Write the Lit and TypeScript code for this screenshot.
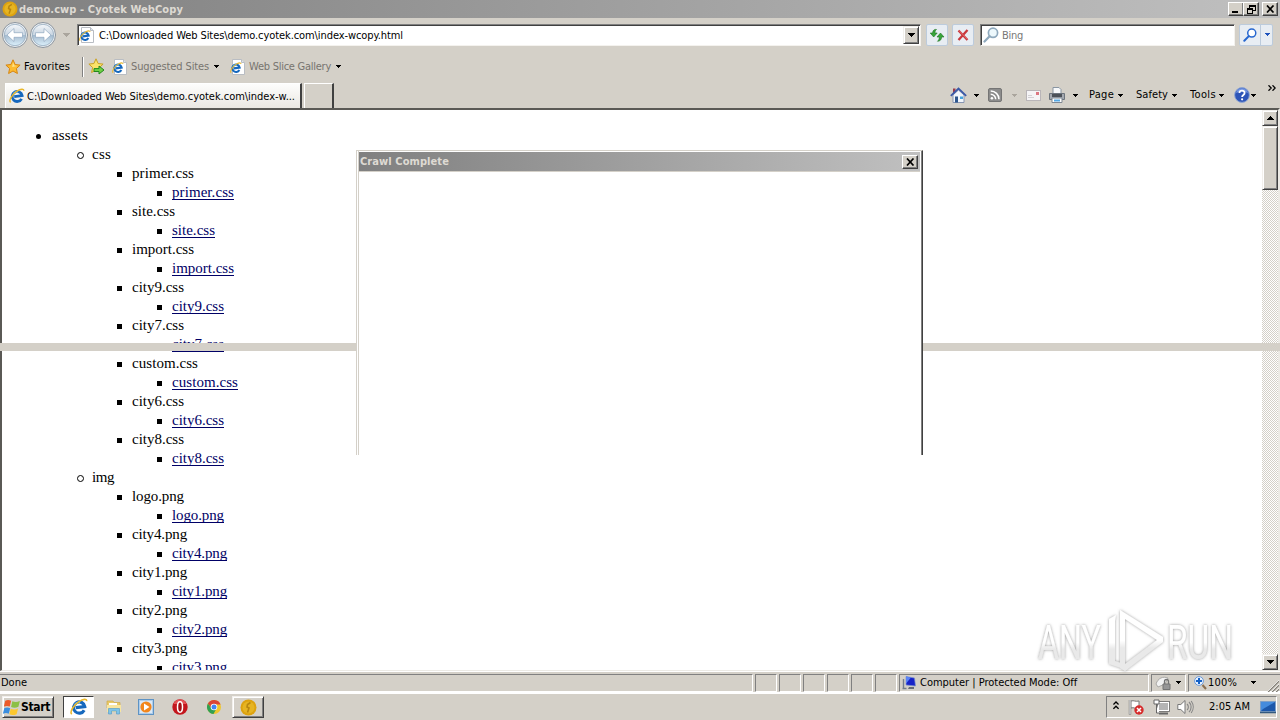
import { LitElement, html, svg, css } from "lit";
import { customElement, property } from "lit/decorators.js";

/** A single line of text whose tracking is adjusted to fill a given width. */
@customElement("fit-text")
class FitText extends LitElement {
  @property({ type: Number }) w = 0;
  @property() text = "";
  static styles = css`
    :host { display: block; white-space: pre; }
    .t { display: inline-block; text-decoration: inherit; }
  `;
  render() {
    return html`<span class="t">${this.text}</span>`;
  }
  updated() {
    const s = this.renderRoot.querySelector(".t") as HTMLElement;
    s.style.letterSpacing = "0px";
    const n = s.getBoundingClientRect().width;
    if (this.w) s.style.letterSpacing = (this.w - n) / this.text.length + "px";
  }
}

const t = (text: string, w: number, cls = "") =>
  html`<fit-text class=${cls} .text=${text} .w=${w}></fit-text>`;

const arrow = (cls = "") =>
  html`<svg class="arrow ${cls}" width="5" height="3" viewBox="0 0 5 3" shape-rendering="crispEdges"><path d="M0 0h5v1h-1v1h-1v1h-1v-1h-1v-1h-1z" fill="currentColor"/></svg>`;
const arrow7 = (cls = "") =>
  html`<svg class="arrow ${cls}" width="7" height="4" viewBox="0 0 7 4" shape-rendering="crispEdges"><path d="M0 0h7v1h-1v1h-1v1h-1v1h-1v-1h-1v-1h-1v-1h-1z" fill="currentColor"/></svg>`;

const eGlyph = svg`
  <path d="M12.6 10.8A5 5 0 1 1 13.1 7.6L5.2 8.6" fill="none" stroke="#1668bd" stroke-width="2.8"/>
  <path d="M4.2 7.2A3.6 3.6 0 0 1 9 4" fill="none" stroke="#5fb9f2" stroke-width="1.4"/>
  <path d="M1.6 14.4C-.6 12.6 3 6.4 8 3.2 11.6.8 15 .4 14.8 2.8" fill="none" stroke="#e9b72c" stroke-width="1.4"/>`;
const ie = (s: number) => html`<svg width=${s} height=${s} viewBox="0 0 16 16">${eGlyph}</svg>`;
const iePage = html`<svg width="15" height="16" viewBox="0 0 15 16">
  <path d="M2.5.5h9l3 3v12h-12z" fill="#fff" stroke="#b9bdc3"/><path d="M11.5.5v3h3" fill="#dde3ea" stroke="#b9bdc3"/>
  <g transform="translate(0 3) scale(.74)">${eGlyph}</g></svg>`;
const starPath = "M8 .8l2.1 4.7 5 .6-3.7 3.4 1 5L8 12l-4.4 2.5 1-5L.9 6.1l5-.6z";
const star = html`<svg width="16" height="16" viewBox="0 0 16 16"><path d=${starPath} fill="#fdbb30" stroke="#d68511"/><path d="M8 3.2l1.2 3.2 3 .5-5 1z" fill="#ffe48d"/></svg>`;
const starAdd = html`<svg width="17" height="17" viewBox="0 0 17 17"><path d=${starPath} fill="#fbe36a" stroke="#c9a125"/><path d="M6 10.6h5V8l5 4-5 4v-2.500H6z" fill="#6fd045" stroke="#23871d"/></svg>`;
const coin = (s: number) => html`<svg width=${s} height=${s} viewBox="0 0 17 17"><circle cx="8.500" cy="8.500" r="8" fill="#dda20f"/><circle cx="8.500" cy="8.500" r="6" fill="#e6b422"/><path d="M10.500 3.500L7.500 5.500 7 8l2 1-1.500 4.500" fill="none" stroke="#b8860f" stroke-width="1.600"/></svg>`;
const orb = (right: boolean) => html`<svg width="28" height="28" viewBox="0 0 28 28">
  <defs><linearGradient id="g" x2="0" y2="1"><stop offset="0" stop-color="#f5f8fb"/><stop offset=".48" stop-color="#cad6e2"/><stop offset=".52" stop-color="#a5bbcf"/><stop offset="1" stop-color="#dcf0fb"/></linearGradient></defs>
  <circle cx="14" cy="14" r="12.500" fill="#edf1f4" stroke="#8b949e"/><circle cx="14" cy="14" r="10.700" fill="url(#g)" stroke="#92a8bd" stroke-width=".8"/>
  <g transform=${right ? "matrix(-1 0 0 1 28 0)" : ""}><path d="M6 14l7-6.500v4.200h8.500v4.600H13v4.200z" fill="#fff" stroke="#8fa8c0" stroke-width=".7"/></g></svg>`;
const lens = (c: string, s: number, f: string) => html`<svg width=${s} height=${s} viewBox="0 0 16 16"><circle cx="10" cy="5.800" r="4.600" fill=${f} stroke=${c} stroke-width="1.700"/><path d="M6.600 9.300L1.500 14.500" stroke=${c} stroke-width="2.300" stroke-linecap="round"/></svg>`;
const refresh = html`<svg width="16" height="16" viewBox="0 0 16 16"><path d="M7.500 2.500C5.800 2 3.600 3 3.600 6H1.200l3.500 4 3.500-4H5.900c0-1.500.5-2.700 1.600-3.500z" fill="#38a53a" stroke="#1f7423" stroke-width=".6"/><path d="M8.500 14.300c2.400 0 4.100-1.600 4.100-4.300H15l-3.500-4L8 10h2.300c0 1.800-.6 3.200-1.800 4.300z" fill="#38a53a" stroke="#1f7423" stroke-width=".6"/></svg>`;
const stop = html`<svg width="14" height="14" viewBox="0 0 14 14"><path d="M2.500 2.500l9 9.500M11.500 2L2.500 12" stroke="#c9373c" stroke-width="2.300"/><path d="M3 2.500l8.500 9" stroke="#ec7d7d" stroke-width=".7"/></svg>`;
const home = html`<svg width="17" height="17" viewBox="0 0 17 17"><path d="M3 8v7.500h11V8L8.500 3z" fill="#f1f5fb" stroke="#8795b2"/><path d="M3 1.500h2.500V5L3 7z" fill="#9a3b4b"/><path d="M.8 8.800L8.500 1.500l7.700 7.300" fill="none" stroke="#3b59a8" stroke-width="1.800"/><path d="M5 9.500h3v6H5z" fill="#2d568e"/><path d="M10 9.500h3V12h-3z" fill="#47a4dd"/></svg>`;
const rss = html`<svg width="14" height="14" viewBox="0 0 14 14"><rect x=".5" y=".5" width="13" height="13" rx="1.500" fill="#8c8c8c" stroke="#757575"/><circle cx="3.900" cy="10.200" r="1.300" fill="#fff"/><path d="M2.700 6.200a5 5 0 0 1 5 5M2.700 3a8.300 8.300 0 0 1 8.300 8.200" fill="none" stroke="#fff" stroke-width="1.500"/></svg>`;
const mail = html`<svg width="15" height="11" viewBox="0 0 15 11"><rect x=".5" y=".5" width="14" height="10" fill="#f5f4f6" stroke="#b9b5b8"/><path d="M2 7.500h6M2 5.500h4" stroke="#d2d0d4"/><path d="M10 2h3v3h-3z" fill="#dc7681"/></svg>`;
const printer = html`<svg width="16" height="16" viewBox="0 0 16 16"><path d="M4 .5h6l2 2V7H4z" fill="#f7f9fb" stroke="#8995a2"/><path d="M.5 6.500h15v6H.5z" fill="#a4a9b0" stroke="#6d747d"/><path d="M3 7h10v3H3z" fill="#4d5259"/><path d="M3 11h10v4.500H3z" fill="#fff" stroke="#7f8792"/><path d="M5 12.500h6v2H5z" fill="#55a8e4"/></svg>`;
const help = html`<svg width="16" height="16" viewBox="0 0 16 16"><circle cx="8" cy="8" r="7.400" fill="#2e55b8" stroke="#8fa6d4"/><path d="M2 6a6.200 6.200 0 0 1 12 0c-4-2-8-2-12 0z" fill="#7394df"/><path d="M5.400 6c.2-3.200 5.300-3 5.200 0 0 2-2.500 1.900-2.500 4" fill="none" stroke="#fff" stroke-width="1.800"/><circle cx="8.100" cy="12.300" r="1.100" fill="#fff"/></svg>`;
const chevrons = html`<svg width="8" height="6" viewBox="0 0 8 6"><path d="M.5.3L3.200 3 .5 5.700M4.500.3L7.200 3 4.500 5.700" fill="none" stroke="#000" stroke-width="1.300"/></svg>`;
const chevUp = html`<svg class="lift" width="6" height="9" viewBox="0 0 6 9"><path d="M.4 3.500L3 1l2.600 2.500M.4 7.800L3 5.300l2.600 2.500" fill="none" stroke="#000" stroke-width="1.400"/></svg>`;
const closeX = html`<svg width="9" height="8" viewBox="0 0 9 8"><path d="M1 .5l6.500 7M7.500 .5L1 7.500" stroke="#000" stroke-width="1.700"/></svg>`;
const minimize = html`<svg width="9" height="8" viewBox="0 0 9 8"><path d="M0 6h6v2H0z"/></svg>`;
const restore = html`<svg width="9" height="9" viewBox="0 0 9 9" shape-rendering="crispEdges"><path d="M2 0h7v6H6V5h2V2H3v1H2zM0 3h6v6H0zM1 5v3h4V5z" fill-rule="evenodd"/></svg>`;
const computer = html`<svg width="15" height="15" viewBox="0 0 15 15"><path d="M1.500 4v9M.5 13.500h4" stroke="#747d8a" stroke-width="1.400"/><path d="M4 1.500l8.500 1.500 1 8-9.500-1z" fill="#1723c8" stroke="#7e93cc" stroke-width=".7"/><path d="M4 1.500l5 1L4 8.500z" fill="#5a83f5"/><path d="M7 12h5v2H6z" fill="#666c78"/></svg>`;
const filter = html`<svg width="16" height="16" viewBox="0 0 16 16"><path d="M1 9C3 3 8 1 13 3l-3 6-7 3z" fill="#f2f2f2" stroke="#aaa9a6"/><path d="M9.500 9V6.500a2 2 0 0 1 4 0V9" fill="none" stroke="#747474" stroke-width="1.300"/><path d="M8 9h7v5.500H8z" fill="#969696" stroke="#747474"/></svg>`;
const zoomIn = html`<svg width="13" height="14" viewBox="0 0 13 14"><circle cx="5" cy="5" r="4.400" fill="#e6f1ff" stroke="#6e9bd8"/><path d="M5 2v6M2 5h6" stroke="#1461c6" stroke-width="2"/><path d="M8.500 9l3.500 4" stroke="#8b6f50" stroke-width="2"/></svg>`;
const grip = html`<svg width="12" height="12" viewBox="0 0 12 12"><path d="M1 12L12 1M5 12l7-7M9 12l3-3" stroke="#848078" stroke-width="1.500"/><path d="M0 12L12 0M4 12l8-8M8 12l4-4" stroke="#fff" stroke-width=".7"/></svg>`;
const windows = html`<svg width="18" height="17" viewBox="0 0 16 15"><path d="M2 1.500c2-1 3.500-.8 5.200.1L6 6.700c-1.600-.8-3-.9-5.200 0z" fill="#ec5a29"/><path d="M8.300 2c2 .9 4 1 6.700-.2l-1.300 5.100c-2.300 1-4.300 1-6.500.2z" fill="#8cc045"/><path d="M.5 8c2-.9 3.500-.7 5.200.1l-1.300 5c-1.600-.9-3.200-.9-5.200 0z" fill="#3b8ede" transform="translate(.7)"/><path d="M6.900 8.500c2 .9 4 1 6.500-.1l-1.300 5c-2.300 1-4.300 1-6.500.2z" fill="#fcc82f"/></svg>`;
const explorer = html`<svg width="16" height="16" viewBox="0 0 16 16"><path d="M1 2h6l1 1.500h6V9H1z" fill="#e9c967" stroke="#ceaa49" stroke-width=".7"/><path d="M3 4h8v4H3z" fill="#fff"/><path d="M1 6h14v7H1z" fill="#f8e5a0"/><path d="M2.500 15V9.500h11V15h-3v-3h-5v3z" fill="#7fc4e8" stroke="#5a9fc8" stroke-width=".7"/></svg>`;
const media = html`<svg width="16" height="16" viewBox="0 0 16 16"><rect x=".5" y=".5" width="15" height="15" fill="#aecdeb" stroke="#5e93c4"/><rect x="2" y="2" width="12" height="12" fill="#dbe9f6"/><circle cx="8" cy="8" r="5.600" fill="#f2861c"/><path d="M6 4.600v6.800L11.500 8z" fill="#fff"/></svg>`;
const opera = html`<svg width="16" height="16" viewBox="0 0 16 16"><circle cx="8" cy="8" r="7.700" fill="#c3161d"/><path d="M1.500 5a7 7 0 0 1 13 0z" fill="#e35356"/><ellipse cx="8" cy="8" rx="2.500" ry="5.200" fill="#a30e14" stroke="#fff" stroke-width="1.500"/></svg>`;
const chrome = html`<svg width="16" height="16" viewBox="0 0 16 16"><circle cx="8" cy="8" r="7" fill="#efc72e"/><path d="M1.900 4.500A7 7 0 0 1 14.600 5.500H8L5.500 9.500z" fill="#db4437"/><path d="M1.900 4.500A7 7 0 0 0 7.500 15l3-5.500-5 0z" fill="#31a052"/><circle cx="8" cy="8" r="3.300" fill="#fff"/><circle cx="8" cy="8" r="2.500" fill="#4285f4"/></svg>`;
const flag = html`<svg width="17" height="16" viewBox="0 0 17 16"><path d="M2 1v14.500" stroke="#777" stroke-width="2.400"/><path d="M3 2c3-1 4 1 8 0v7c-4 1-5-1-8 0z" fill="#fff" stroke="#777"/><path d="M2 1v14" stroke="#fff"/><circle cx="11" cy="11" r="4.700" fill="#d62c2c"/><path d="M9 9l4 4M13 9l-4 4" stroke="#fff" stroke-width="1.500"/></svg>`;
const network = html`<svg width="17" height="16" viewBox="0 0 17 16"><rect x="5.500" y="3.500" width="10" height="8" fill="#b4b4b4" stroke="#fff"/><rect x="4.500" y="2.500" width="12" height="10" fill="none" stroke="#666" stroke-width=".8"/><path d="M6 14.500h9" stroke="#666" stroke-width="2"/><path d="M1 1h5v4H1zM3.500 5v9h3" fill="#fff" stroke="#666"/></svg>`;
const speaker = html`<svg width="17" height="16" viewBox="0 0 17 16"><path d="M.8 5.500h3L8 1.500v13l-4.200-4h-3z" fill="#fff" stroke="#777"/><path d="M10 5a4 4 0 0 1 0 6M12 3a7 7 0 0 1 0 10M14.200 2a10 10 0 0 1 0 12" fill="none" stroke="#858585" stroke-width="1.100"/></svg>`;
const desktop = html`<svg width="16" height="13" viewBox="0 0 16 13"><path d="M.5.5h15v10H.5z" fill="#1c57aa" stroke="#7e9fc6"/><path d="M1 1h14L3 8 1 10z" fill="#448bdd"/><path d="M0 11.500h16" stroke="#33597f" stroke-width="1.500"/></svg>`;

const rows: [number, string, number][] = [[0, "assets", 36], [1, "css", 19]];
const add = (name: string, w: number) => rows.push([2, name, w], [3, name, w]);
([["primer.css", 62], ["site.css", 43], ["import.css", 62], ["city9.css", 52], ["city7.css", 52], ["custom.css", 66], ["city6.css", 52], ["city8.css", 52]] as [string, number][]).forEach(([n, w]) => add(n, w));
rows.push([1, "img", 22]);
([["logo.png", 52], ["city4.png", 55], ["city1.png", 55], ["city2.png", 55], ["city3.png", 55]] as [string, number][]).forEach(([n, w]) => add(n, w));

@customElement("app-root")
class AppRoot extends LitElement {
  static styles = css`
    :host { display: block; width: 1280px; height: 720px; overflow: hidden; background: #d4d0c8; color: #000;
      font: 11px/14px "DejaVu Sans Condensed", "DejaVu Sans", sans-serif; font-stretch: condensed; position: relative; }
    * { box-sizing: border-box; }
    svg { display: block; }
    .window { display: grid; grid-template-rows: 18px 33px 31px 26px 563px 22px 27px; }
    .bar { display: grid; align-items: center; justify-items: start; }
    .title { background: linear-gradient(90deg, #808080, #c0c0c0); color: #dedad3; grid-template-columns: 2px 17px 1209px 15px 19px 16px; }
    .bold { font-weight: bold; }
    .title .bold, .nav fit-text { padding-top: 2px; }
    .cap { width: 16px; height: 14px; background: #d4d0c8; border: 1px solid; border-color: #fff #404040 #404040 #fff; box-shadow: inset -1px -1px #808080; display: grid; place-content: center; color: #000; }
    .nav { grid-template-columns: 1px 28px 34px 14px 849px 26px 28px 259px 35px; }
    .field { height: 22px; background: #fff; border: 1px solid; border-color: #808080 #f4f2ee #f4f2ee #808080; box-shadow: inset 1px 1px #404040; display: grid; align-items: center; }
    .address { width: 844px; grid-template-columns: 1px 20px 804px 16px; }
    .drop { width: 16px; height: 18px; }
    .search { width: 255px; grid-template-columns: 2px 19px 1fr; color: #777; }
    .btn { width: 22px; height: 22px; border: 1px solid #bccbdc; border-radius: 2px; background: #e8edf3; display: grid; place-content: center; }
    .split { width: 34px; grid-template-columns: 20px 13px; place-content: stretch; place-items: center; color: #1e53bd; }
    .split > span { border-left: 1px solid #bccbdc; height: 20px; width: 13px; display: grid; place-content: center; }
    .dim { color: #aaa59d; }
    .gray { color: #77746f; }
    .fav { grid-template-columns: 5px 19px 58px 6px 24px 19px 83px 16px 19px 87px 10px; }
    .fav .sep { width: 2px; height: 20px; border-left: 1px solid #808080; border-right: 1px solid #fff; }
    .fav .gray { padding-top: 1px; }
    .tabs { grid-template-columns: 5px 299px 646px 24px 14px 24px 14px 23px 24px 16px 29px 18px 36px 18px 29px 15px 17px 17px 9px; }
    .tab { width: 297px; height: 25px; align-self: end; background: linear-gradient(#fdfdfc, #ebe8e2); border: 1px solid #fff; border-right: 2px solid #404040; border-bottom: 0; display: grid; grid-template-columns: 3px 18px 1fr; align-items: center; }
    .tab fit-text { padding-top: 1px; }
    .newtab { width: 30px; height: 25px; align-self: end; border: 1px solid #fff; border-right: 2px solid #404040; border-bottom: 0; }
    .up { align-self: start; margin-top: 3px; }
    .view { display: grid; grid-template-columns: 1fr 16px; background: #fff; border: solid; border-width: 2px 2px 1px 2px; border-color: #5a5955 #eceae5 #eceae5 #5a5955; overflow: hidden; }
    .list { padding-top: 16px; height: 560px; overflow: hidden; font: 15px/19px "Liberation Serif", serif; }
    .row { height: 19px; display: grid; align-items: center; }
    .d0 { grid-template-columns: 34px 16px 1fr; }
    .d1 { grid-template-columns: 75px 15px 1fr; }
    .d2 { grid-template-columns: 115px 15px 1fr; }
    .d3 { grid-template-columns: 155px 15px 1fr; }
    .disc, .circle, .square { width: 5px; height: 5px; background: #000; grid-column: 2; margin-top: 2px; }
    .disc { border-radius: 50%; }
    .circle { border-radius: 50%; border: 1px solid #000; background: none; width: 7px; height: 7px; }
    .link { color: #000066; text-decoration: underline; text-decoration-thickness: 1px; text-underline-offset: 2px; text-decoration-skip-ink: none; }
    .scroll { display: grid; grid-template-rows: 16px 64px 1fr 16px; background: repeating-conic-gradient(#fff 0 25%, #d4d0c8 0 50%) 0 0 / 2px 2px; }
    .raised { background: #d4d0c8; border: 1px solid; border-color: #f2f0ec #404040 #404040 #f2f0ec; box-shadow: inset 1px 1px #fff, inset -1px -1px #808080; display: grid; place-content: center; }
    .flip { transform: rotate(180deg); }
    .status { grid-template-columns: 753px repeat(6, 22px) 250px 35px 92px; column-gap: 2px; padding-top: 1px; border-top: 1px solid #fff; border-bottom: 1px solid #fff; }
    .pane { width: 100%; height: 18px; border: 1px solid; border-color: #808080 #fff #fff #808080; display: grid; align-items: center; }
    .pane fit-text { padding-top: 1px; }
    .first { border-left: 0; padding-left: 1px; }
    .mode { grid-template-columns: 2px 18px 1fr; }
    .lock { grid-template-columns: 3px 21px 1fr; }
    .zoom { grid-template-columns: 5px 14px 43px 16px 1fr; border-right: 0; }
    .grip { align-self: end; margin-bottom: -1px; }
    .task { border-top: 1px solid #fff; grid-template-columns: 2px 61px 43px 32px 34px 34px 26px 874px 170px; }
    .start { width: 52px; height: 22px; grid-template-columns: 18px 1fr; place-content: center start; align-items: center; }
    .start .bold { font-size: 12px; }
    .pressed { width: 31px; height: 22px; background: #fff; border: 1px solid; border-color: #404040 #fff #fff #404040; display: grid; place-content: center; }
    .app { width: 32px; height: 22px; }
    .lift { margin-top: -3px; }
    .tray { width: 171px; height: 22px; border: 1px solid; border-color: #808080 #fff #fff #808080; display: grid; align-items: center; grid-template-columns: 6px 15px 25px 24px 32px 51px 1fr; }
    .band { position: absolute; left: 0; top: 343px; width: 1280px; height: 8px; background: #d4d0c8; }
    .dialog { position: absolute; left: 356px; top: 150px; width: 567px; height: 305px; background: #fff; border: 1px solid; border-color: #d4d0c8 #404040 transparent #d4d0c8; border-bottom: 0; padding: 1px 2px 0 1px; box-shadow: inset -1px 0 #808080, inset 1px 0 #fff, inset 2px 0 #d4d0c8; }
    .dtitle { height: 20px; margin-left: 1px; background: linear-gradient(90deg, #808080, #c0c0c0); border-bottom: 1px solid #d4d0c8; color: #dedad3; display: grid; grid-template-columns: 1px 542px 16px; align-items: center; }
    .dtitle .bold { padding-top: 1px; }
    .mark { position: absolute; left: 1034px; top: 604px; }
    .mark text { font: 400 49px Roboto, sans-serif; }
  `;

  render() {
    return html`
      <div class="window">
        <div class="bar title"><i></i>${coin(16)}${t("demo.cwp - Cyotek WebCopy", 164, "bold")}
          <div class="cap">${minimize}</div><div class="cap">${restore}</div><div class="cap">${closeX}</div></div>
        <div class="bar nav"><i></i>${orb(false)}${orb(true)}${arrow7("dim")}
          <div class="field address"><i></i>${iePage}${t("C:\\Downloaded Web Sites\\demo.cyotek.com\\index-wcopy.html", 304)}<div class="raised drop">${arrow7()}</div></div>
          <div class="btn">${refresh}</div><div class="btn">${stop}</div>
          <div class="field search"><i></i>${lens("#8fa9bd", 16, "#edf8fc")}${t("Bing", 21)}</div>
          <div class="btn split">${lens("#2767cf", 14, "#fff")}<span>${arrow()}</span></div>
        </div>
        <div class="bar fav"><i></i>${star}${t("Favorites", 46)}<div class="sep"></div>${starAdd}${iePage}${t("Suggested Sites", 78, "gray")}${arrow()}${iePage}${t("Web Slice Gallery", 82, "gray")}${arrow()}</div>
        <div class="bar tabs"><i></i>
          <div class="tab"><i></i>${ie(16)}${t("C:\\Downloaded Web Sites\\demo.cyotek.com\\index-w...", 268)}</div>
          <div class="newtab"></div>
          ${home}${arrow()}${rss}${arrow("dim")}${mail}${printer}${arrow()}
          ${t("Page", 25)}${arrow()}${t("Safety", 32)}${arrow()}${t("Tools", 26)}${arrow()}${help}${arrow()}<div class="up">${chevrons}</div>
        </div>
        <div class="view">
          <div class="list">${rows.map(([d, n, w]) => html`<div class="row d${d}"><i class=${["disc", "circle", "square", "square"][d]}></i>${t(n, w, d === 3 ? "link" : "")}</div>`)}</div>
          <div class="scroll"><div class="raised">${arrow7("flip")}</div><div class="raised"></div><i></i><div class="raised">${arrow7()}</div></div>
        </div>
        <div class="bar status"><div class="pane first">${t("Done", 26)}</div>
          ${[1, 2, 3, 4, 5, 6].map(() => html`<div class="pane"></div>`)}
          <div class="pane mode"><i></i>${computer}${t("Computer | Protected Mode: Off", 157)}</div>
          <div class="pane lock"><i></i>${filter}${arrow()}</div>
          <div class="pane zoom"><i></i>${zoomIn}${t("100%", 29)}${arrow()}<div class="grip">${grip}</div></div></div>
        <div class="bar task"><i></i><div class="raised start">${windows}${t("Start", 29, "bold")}</div>
          <div class="pressed">${ie(18)}</div>${explorer}${media}${opera}${chrome}
          <div class="raised app">${coin(17)}</div>
          <div class="tray"><i></i>${chevUp}${flag}${network}${speaker}${t("2:05 AM", 41)}${desktop}</div></div>
      </div>
      <div class="band"></div>
      <div class="dialog"><div class="dtitle"><i></i>${t("Crawl Complete", 89, "bold")}<div class="cap">${closeX}</div></div></div>
      <svg class="mark" width="214" height="72" viewBox="0 0 214 72">
        <defs><linearGradient id="m" x2="0" y2="1"><stop offset=".5" stop-color="#fff"/><stop offset=".62" stop-color="#e9e9e9"/></linearGradient>
          <filter id="s" x="-10%" y="-10%" width="120%" height="120%"><feDropShadow dx="0" dy="0" stdDeviation="1.5" flood-color="#777" flood-opacity=".75"/></filter></defs>
        <g fill="url(#m)" filter="url(#s)">
          <text x="4" y="55" textLength="63" lengthAdjust="spacingAndGlyphs">ANY</text>
          <text x="133" y="55" textLength="66" lengthAdjust="spacingAndGlyphs">RUN</text>
          <path d="M82 11l-7 4v45l18 6v-5l-12-4V17z"/>
          <path fill-rule="evenodd" d="M86 6l43 27v5L91 67l-5-3zM91 15v45l32-24z"/>
        </g></svg>
    `;
  }
}

export { FitText, AppRoot };
